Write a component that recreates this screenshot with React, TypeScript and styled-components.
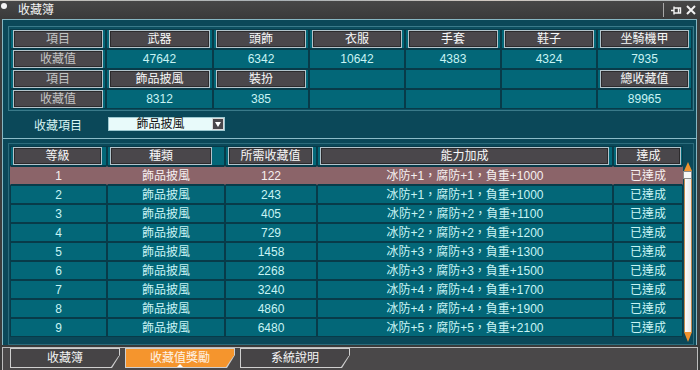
import React from 'react'
import styled, { createGlobalStyle } from 'styled-components'

const GlobalStyle = createGlobalStyle`
  html, body {
    margin: 0;
    padding: 0;
    background: #2b2b2b;
  }
  * {
    box-sizing: border-box;
  }
`

type StatCell = { kind: 'label' | 'head' | 'value' | 'empty'; text?: string }

const statRows: StatCell[][] = [
  [
    { kind: 'label', text: '項目' },
    { kind: 'head', text: '武器' },
    { kind: 'head', text: '頭飾' },
    { kind: 'head', text: '衣服' },
    { kind: 'head', text: '手套' },
    { kind: 'head', text: '鞋子' },
    { kind: 'head', text: '坐騎機甲' },
  ],
  [
    { kind: 'label', text: '收藏值' },
    { kind: 'value', text: '47642' },
    { kind: 'value', text: '6342' },
    { kind: 'value', text: '10642' },
    { kind: 'value', text: '4383' },
    { kind: 'value', text: '4324' },
    { kind: 'value', text: '7935' },
  ],
  [
    { kind: 'label', text: '項目' },
    { kind: 'head', text: '飾品披風' },
    { kind: 'head', text: '裝扮' },
    { kind: 'empty' },
    { kind: 'empty' },
    { kind: 'empty' },
    { kind: 'head', text: '總收藏值' },
  ],
  [
    { kind: 'label', text: '收藏值' },
    { kind: 'value', text: '8312' },
    { kind: 'value', text: '385' },
    { kind: 'empty' },
    { kind: 'empty' },
    { kind: 'empty' },
    { kind: 'value', text: '89965' },
  ],
]

const rewards = [
  { lv: 1, need: 122, bonus: '冰防+1，腐防+1，負重+1000' },
  { lv: 2, need: 243, bonus: '冰防+1，腐防+1，負重+1000' },
  { lv: 3, need: 405, bonus: '冰防+2，腐防+2，負重+1100' },
  { lv: 4, need: 729, bonus: '冰防+2，腐防+2，負重+1200' },
  { lv: 5, need: 1458, bonus: '冰防+3，腐防+3，負重+1300' },
  { lv: 6, need: 2268, bonus: '冰防+3，腐防+3，負重+1500' },
  { lv: 7, need: 3240, bonus: '冰防+4，腐防+4，負重+1700' },
  { lv: 8, need: 4860, bonus: '冰防+4，腐防+4，負重+1900' },
  { lv: 9, need: 6480, bonus: '冰防+5，腐防+5，負重+2100' },
]

const headers = [
  { text: '等級', gap: 4 },
  { text: '種類', gap: 12 },
  { text: '所需收藏值', gap: 3 },
  { text: '能力加成', gap: 3 },
  { text: '達成', gap: 1 },
]

const tabs = ['收藏簿', '收藏值獎勵', '系統說明']

const App = (): JSX.Element => {
  return (
    <>
      <GlobalStyle />
      <Window>
        <TopStrip />
        <TitleBar>
          <Dot />
          <Title>收藏簿</Title>
          <Sep />
          <svg width="11" height="11" viewBox="0 0 11 11" style={{ marginRight: 4 }}>
            <path d="M0 5.5H3M3 1.5V9.5M3 3H9.5V8H3M7.5 3V8" stroke="#f2f2f2" strokeWidth="1.4" fill="none" />
          </svg>
          <svg width="10" height="10" viewBox="0 0 10 10">
            <path d="M1 1L9 9M9 1L1 9" stroke="#f2f2f2" strokeWidth="2" />
          </svg>
        </TitleBar>

        <Body>
          <StatsFrame>
            <StatsGrid>
              {statRows.map((row, r) =>
                row.map((cell, c) => (
                  <Cell key={`${r}-${c}`} $pad={cell.kind === 'head' || cell.kind === 'label'}>
                    {cell.kind === 'label' && <Button $dim>{cell.text}</Button>}
                    {cell.kind === 'head' && <Button>{cell.text}</Button>}
                    {cell.kind === 'value' && cell.text}
                  </Cell>
                ))
              )}
            </StatsGrid>
          </StatsFrame>

          <FilterRow>
            <FilterLabel>收藏項目</FilterLabel>
            <Select>
              <SelectText>飾品披風</SelectText>
              <SelectArrow />
            </Select>
          </FilterRow>

          <Divider />

          <ListFrame>
            <Table>
              <ListGrid>
                {headers.map((h) => (
                  <Cell key={h.text} $pad>
                    <Button style={{ marginRight: h.gap }}>{h.text}</Button>
                  </Cell>
                ))}
              </ListGrid>
              {rewards.map((r) => (
                <ListGrid key={r.lv} $row>
                  <Cell $sel={r.lv === 1}>{r.lv}</Cell>
                  <Cell $sel={r.lv === 1}>飾品披風</Cell>
                  <Cell $sel={r.lv === 1}>{r.need}</Cell>
                  <Cell $sel={r.lv === 1}>{r.bonus}</Cell>
                  <Cell $sel={r.lv === 1}>已達成</Cell>
                </ListGrid>
              ))}
            </Table>
            <ScrollCol>
              <ArrowUp />
              <Thumb />
              <Track />
              <ArrowDown />
            </ScrollCol>
          </ListFrame>
        </Body>

        <TabBar>
          <TabStrip>
            {tabs.map((t, i) => (
              <TabEdge key={t}>
                <TabFace $active={i === 1}>{t}</TabFace>
              </TabEdge>
            ))}
          </TabStrip>
        </TabBar>
      </Window>
    </>
  )
}

export default App

const Window = styled.div`
  width: 700px;
  height: 370px;
  display: flex;
  flex-direction: column;
  background: #3c3c3c;
  overflow: hidden;
  font-family: "Liberation Sans", "Noto Sans CJK TC", sans-serif;
  font-size: 12px;
`
const TopStrip = styled.div`
  height: 2px;
  background: linear-gradient(to right, #c8c4bc, #a8b0b4 40%, #d0c8c0 70%, #b0b8bc);
`
const TitleBar = styled.div`
  height: 18px;
  display: flex;
  align-items: center;
  padding: 0 4px 0 1px;
  background: linear-gradient(#474747, #3a3a3a);
`
const Dot = styled.span`
  width: 6px;
  height: 6px;
  border-radius: 50%;
  background: #f4f4f4;
  align-self: flex-start;
  margin-top: 2px;
`
const Title = styled.span`
  margin-left: 11px;
  color: #f4f4f4;
  font-size: 12px;
  line-height: 18px;
  flex: 1;
`
const Sep = styled.span`
  width: 1px;
  height: 14px;
  background: #a8a8a8;
  margin-right: 7px;
`
const Body = styled.div`
  flex: 1;
  display: flex;
  flex-direction: column;
  margin: 0 3px 0 2px;
  border: 1px solid #86b6c2;
  border-bottom: 0;
  background: #0b4859;
`
const StatsFrame = styled.div`
  margin: 6px 2px 0 5px;
  padding: 2px 1px 1px;
  border: 1px solid #3a7a8a;
  background: #0d4f60;
`
const StatsGrid = styled.div`
  display: grid;
  grid-template-columns: 96px 107px 96px 96px 96px 96px 95px;
  grid-auto-rows: 20px;
`
const Cell = styled.div<{ $pad?: boolean; $sel?: boolean }>`
  display: flex;
  align-items: center;
  justify-content: center;
  padding: ${(p) => (p.$pad ? '0 0 0 2px' : '0')};
  border: 1px solid #083b49;
  border-left-color: ${(p) => (p.$sel ? '#8b6469' : '#083b49')};
  border-right-color: ${(p) => (p.$sel ? '#8b6469' : '#083b49')};
  background: ${(p) => (p.$sel ? '#8b6469' : '#036778')};
  color: ${(p) => (p.$sel ? '#f6f0f0' : '#c8f4f4')};
  line-height: 16px;
  white-space: nowrap;
`
const Button = styled.div<{ $dim?: boolean }>`
  flex: 1;
  height: 100%;
  margin-right: 2px;
  display: flex;
  align-items: center;
  justify-content: center;
  background: #4a474b;
  border: 1px solid #b2c4cc;
  box-shadow: inset 0 0 0 1px #2c2a2c;
  color: ${(p) => (p.$dim ? '#c4c4c4' : '#f8f8f8')};
`
const FilterRow = styled.div`
  height: 14px;
  margin: 6px 0 0 7px;
  display: flex;
  align-items: center;
`
const FilterLabel = styled.span`
  width: 96px;
  text-align: center;
  color: #d8f4f4;
`
const Select = styled.div`
  width: 117px;
  height: 14px;
  margin-left: 2px;
  display: flex;
  background: #e8fafa;
  border: 1px solid #9cc8d0;
`
const SelectText = styled.span`
  flex: 1;
  text-align: center;
  color: #111;
  line-height: 12px;
`
const SelectArrow = styled.span`
  width: 12px;
  height: 12px;
  background: #4a474b;
  border: 1px solid #dcdcdc;
  display: flex;
  align-items: center;
  justify-content: center;

  &::after {
    content: '';
    border-left: 3px solid transparent;
    border-right: 3px solid transparent;
    border-top: 5px solid #fff;
  }
`
const Divider = styled.div`
  height: 1px;
  margin-top: 7px;
  background: #8cbcc8;
`
const ListFrame = styled.div`
  margin: 4px 2px 0 5px;
  padding: 2px 1px;
  border: 1px solid #2c6c7c;
  display: flex;
`
const Table = styled.div`
  width: 673px;
  display: flex;
  flex-direction: column;
`
const ListGrid = styled.div<{ $row?: boolean }>`
  display: grid;
  grid-template-columns: 97px 118px 92px 296px 70px;
  height: ${(p) => (p.$row ? '19px' : '20px')};
`
const ScrollCol = styled.div`
  width: 10px;
  padding-top: 16px;
  display: flex;
  flex-direction: column;
  align-items: center;
  height: 196px;
`
const ArrowUp = styled.div`
  width: 0;
  height: 0;
  border-left: 4px solid transparent;
  border-right: 4px solid transparent;
  border-bottom: 9px solid #f0922e;
`
const Thumb = styled.div`
  width: 9px;
  height: 8px;
  background: #f8f8f8;
  border: 1px solid #8a8a8a;
`
const Track = styled.div`
  width: 8px;
  flex: 1;
  background: linear-gradient(to right, #c08a50 0 1px, #fafafa 1px, #e8e8e8 7px, #c08a50 7px);
`
const ArrowDown = styled.div`
  width: 0;
  height: 0;
  border-left: 4px solid transparent;
  border-right: 4px solid transparent;
  border-top: 10px solid #f0922e;
`
const TabBar = styled.div`
  height: 25px;
  padding: 2px 2px 0 2px;
  background: #3a3a3a;
`
const TabStrip = styled.div`
  height: 23px;
  display: flex;
  gap: 5px;
  padding: 0 0 0 7px;
  border: 1px solid #bdbdbd;
  border-bottom: 0;
  background: #4a4849;
`
const shape = 'polygon(0 0, 100% 0, 100% 35%, calc(100% - 8px) 100%, 0 100%)'

const TabEdge = styled.div`
  width: 110px;
  height: 20px;
  padding: 1px;
  background: #cfcfcf;
  clip-path: ${shape};
`
const TabFace = styled.div<{ $active?: boolean }>`
  position: relative;
  height: 100%;
  display: flex;
  align-items: center;
  justify-content: center;
  clip-path: ${shape};
  background: ${(p) => (p.$active ? '#f5952d' : '#464446')};
  color: ${(p) => (p.$active ? '#fff4e8' : '#f4f4f4')};
  line-height: 16px;

  &::after {
    content: '';
    display: ${(p) => (p.$active ? 'block' : 'none')};
    position: absolute;
    bottom: 0;
    left: 50%;
    margin-left: -3px;
    border-left: 3px solid transparent;
    border-right: 3px solid transparent;
    border-bottom: 3px solid #fff;
  }
`
